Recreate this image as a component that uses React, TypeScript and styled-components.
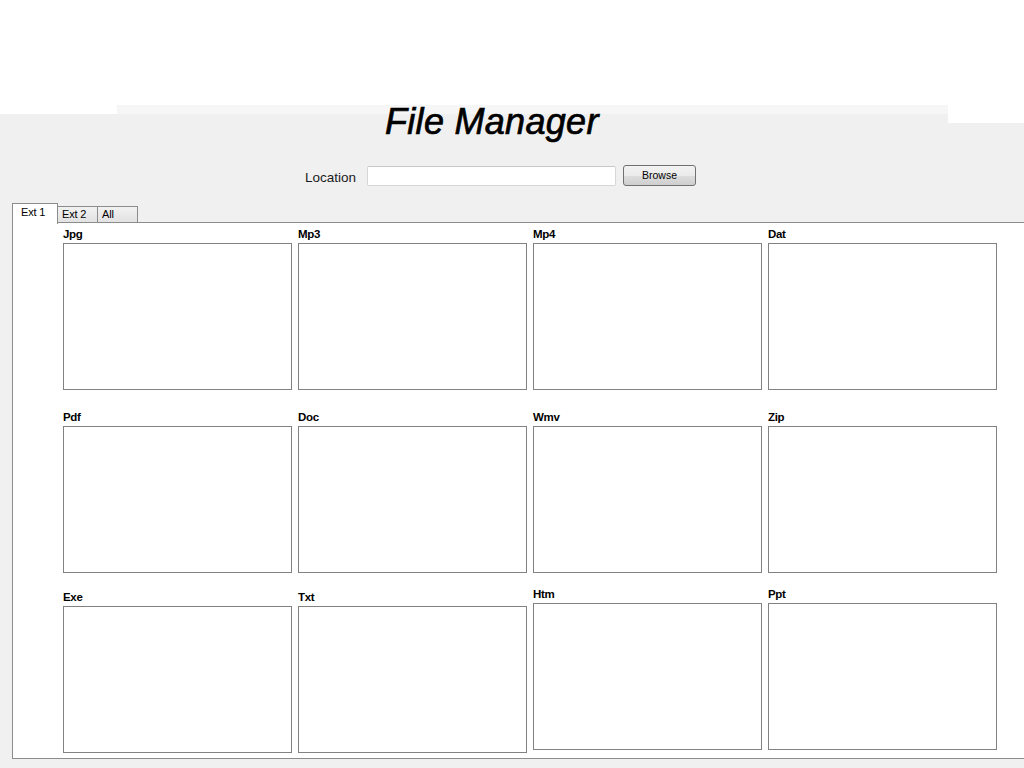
import React from "react";
import styled, { createGlobalStyle } from "styled-components";

const Global = createGlobalStyle`
  html, body { margin: 0; padding: 0; }
  body { width: 1024px; height: 768px; overflow: hidden; font-family: "Liberation Sans", Arial, sans-serif; }
`;

const Page = styled.div`
  width: 1024px;
  height: 768px;
  overflow: hidden;
  display: flex;
  flex-direction: column;
  background:
    linear-gradient(#ffffff, #ffffff) 0 0 / 100% 105px no-repeat,
    linear-gradient(#ffffff, #ffffff) 0 105px / 117px 9px no-repeat,
    linear-gradient(#f6f6f6, #f6f6f6) 117px 105px / 831px 9px no-repeat,
    linear-gradient(#ffffff, #ffffff) 948px 105px / 76px 18px no-repeat,
    #f0f0f0;
`;

const Title = styled.h1`
  margin: 102px 0 0 385px;
  font-family: "Liberation Sans", Arial, sans-serif;
  font-style: italic;
  font-weight: normal;
  font-size: 36px;
  line-height: 40px;
  color: #000;
  letter-spacing: 0.3px;
  -webkit-text-stroke: 0.7px #000;
`;

const LocationRow = styled.div`
  display: flex;
  align-items: center;
  margin: 22px 0 0 305px;
  height: 22px;
`;

const Label = styled.span`
  font-size: 13.5px;
  color: #1a1a1a;
  margin-right: 11px;
  padding-top: 5px;
`;

const Input = styled.div`
  width: 247px;
  height: 18px;
  background: #fff;
  border: 1px solid #d6d6d6;
  border-top-color: #c8c8c8;
  border-radius: 2px;
  margin-top: 2px;
`;

const Button = styled.div`
  margin-left: 7px;
  width: 71px;
  height: 19px;
  border: 1px solid #707070;
  border-radius: 3px;
  background: linear-gradient(#f2f2f2 0%, #ebebeb 50%, #dddddd 51%, #cfcfcf 100%);
  display: flex;
  align-items: center;
  justify-content: center;
  font-size: 10.5px;
  color: #000;
`;

const TabStrip = styled.div`
  display: flex;
  align-items: flex-end;
  margin: 16px 0 0 12px;
  height: 21px;
  position: relative;
  z-index: 1;
`;

const Tab = styled.div<{ $active?: boolean; $w: number }>`
  box-sizing: border-box;
  height: ${(p) => (p.$active ? 21 : 17)}px;
  padding: ${(p) => (p.$active ? "2px 0 0 8px" : "1px 0 0 4px")};
  width: ${(p) => p.$w}px;
  border: 1px solid #8c8c8c;
  border-bottom: ${(p) => (p.$active ? "none" : "1px solid #8c8c8c")};
  border-left: ${(p) => (p.$active ? "1px solid #8c8c8c" : "none")};
  background: ${(p) => (p.$active ? "#ffffff" : "linear-gradient(#f2f2f2, #e2e2e2)")};
  font-size: 11px;
  color: #000;
  letter-spacing: -0.2px;
  ${(p) => (p.$active ? "margin-bottom: -1px;" : "")}
`;

const Panel = styled.div`
  margin: -1px 0 0 12px;
  width: 1030px;
  height: 537px;
  box-sizing: border-box;
  background: #fff;
  border: 1px solid #8c8c8c;
  padding: 5px 0 0 50px;
`;

const Grid = styled.div`
  display: grid;
  grid-template-columns: repeat(4, 229px);
  column-gap: 6px;
  row-gap: 21px;
`;

const Cell = styled.div<{ $shift?: number }>`
  display: flex;
  flex-direction: column;
  margin-top: ${(p) => p.$shift ?? 0}px;
`;

const GroupLabel = styled.div`
  font-size: 11.5px;
  font-weight: bold;
  line-height: 13px;
  height: 13px;
  margin-bottom: 2px;
  color: #000;
  letter-spacing: -0.3px;
`;

const Box = styled.div`
  box-sizing: border-box;
  height: 147px;
  border: 1px solid #828282;
  background: #fff;
`;

const groups: { name: string; shift?: number }[] = [
  { name: "Jpg" },
  { name: "Mp3" },
  { name: "Mp4" },
  { name: "Dat" },
  { name: "Pdf" },
  { name: "Doc" },
  { name: "Wmv" },
  { name: "Zip" },
  { name: "Exe", shift: -3 },
  { name: "Txt", shift: -3 },
  { name: "Htm", shift: -6 },
  { name: "Ppt", shift: -6 },
];

export default function App() {
  return (
    <>
      <Global />
      <Page>
        <Title>File Manager</Title>
        <LocationRow>
          <Label>Location</Label>
          <Input />
          <Button>Browse</Button>
        </LocationRow>
        <TabStrip>
          <Tab $active $w={46}>Ext 1</Tab>
          <Tab $w={40}>Ext 2</Tab>
          <Tab $w={40}>All</Tab>
        </TabStrip>
        <Panel>
          <Grid>
            {groups.map((g) => (
              <Cell key={g.name} $shift={g.shift}>
                <GroupLabel>{g.name}</GroupLabel>
                <Box />
              </Cell>
            ))}
          </Grid>
        </Panel>
      </Page>
    </>
  );
}
